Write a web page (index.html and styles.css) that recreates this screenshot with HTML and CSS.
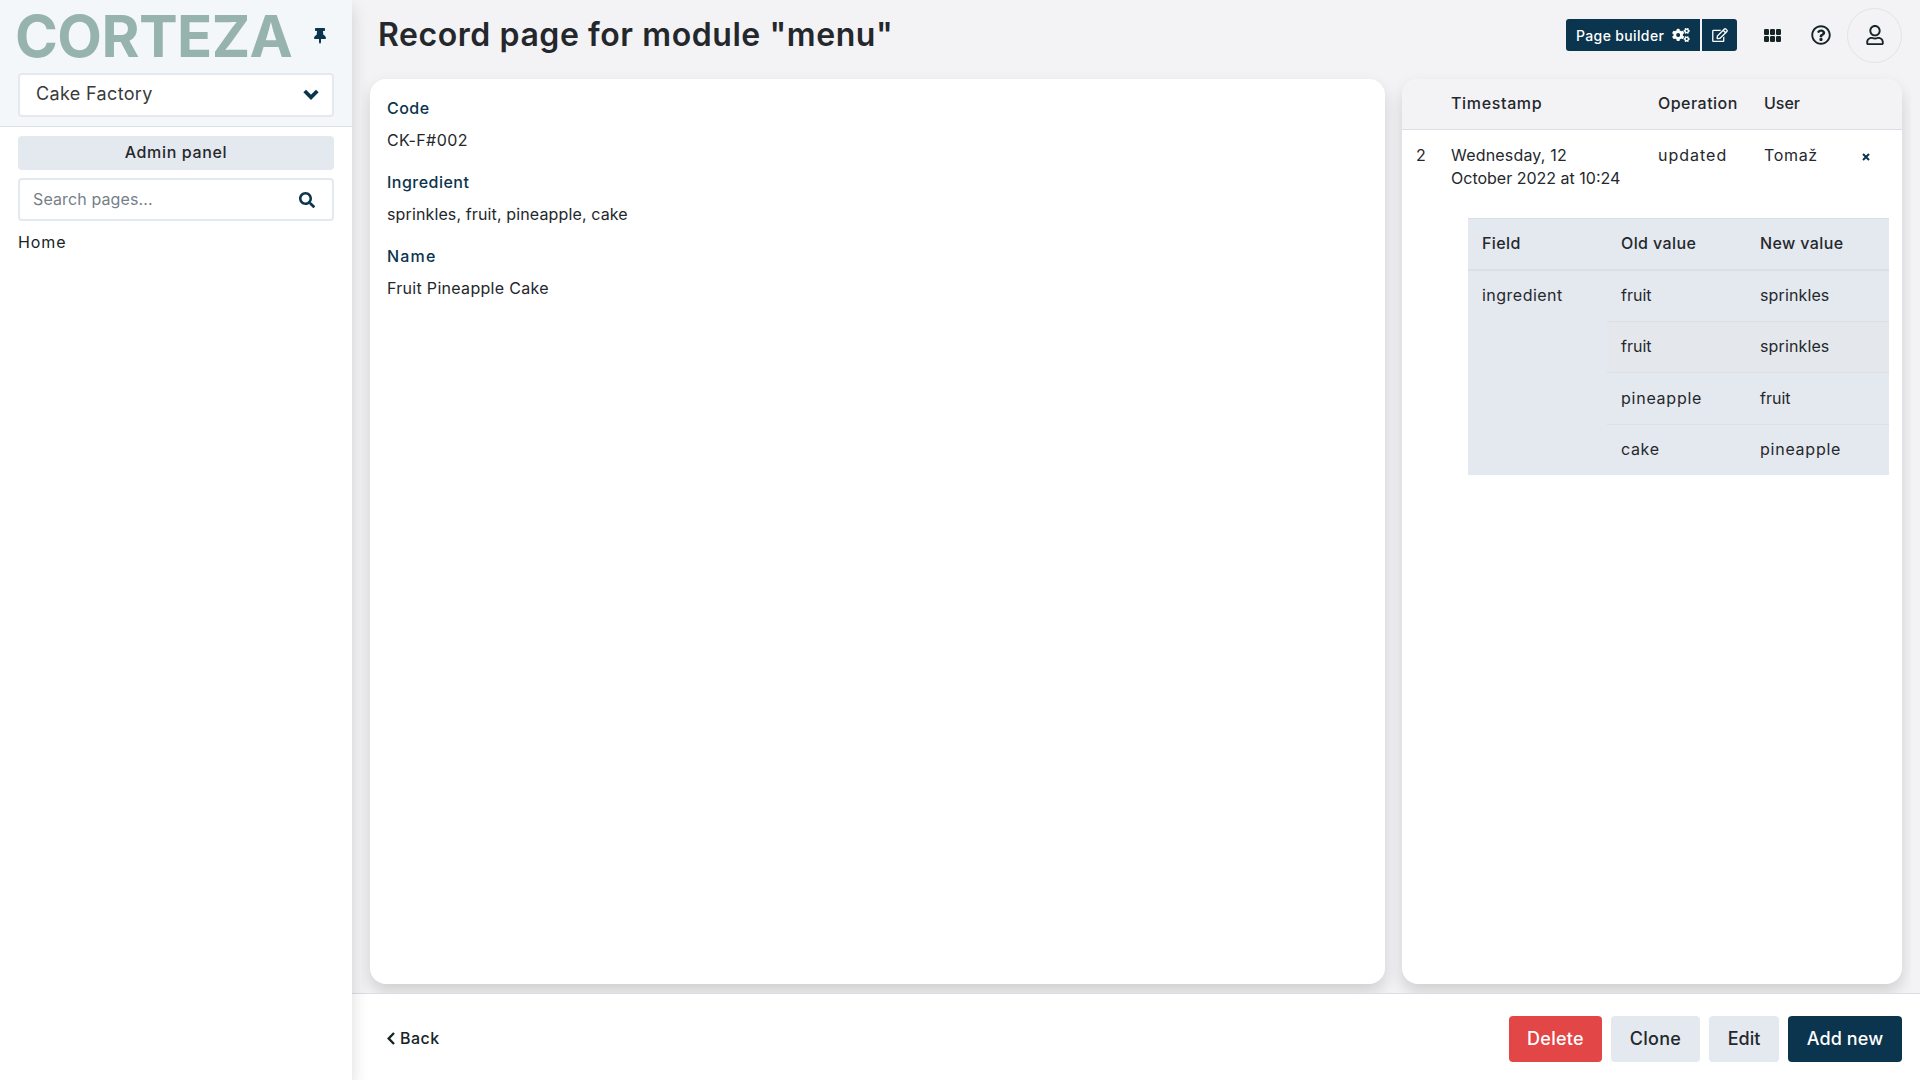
FILE: index.html
```
<!DOCTYPE html>
<html lang="en">
<head>
<meta charset="utf-8">
<title>Record page for module "menu"</title>
<link rel="stylesheet" href="styles.css">
</head>
<body>
<div class="app">
  <aside class="sidebar">
    <div class="sidebar-head">
      <div class="brand">
        <span class="logo">CORTEZA</span>
        <svg class="pin" viewBox="0 0 384 512"><path d="M298 214.300L285.800 96H328c13.300 0 24-10.700 24-24V24c0-13.300-10.700-24-24-24H56C42.700 0 32 10.700 32 24v48c0 13.300 10.700 24 24 24h42.200L86 214.300C37.500 236.800 0 277.300 0 328c0 13.300 10.700 24 24 24h136v104c0 1.200.3 2.500.8 3.600l24 48c2.900 5.900 11.400 5.900 14.300 0l24-48c.6-1.100.9-2.300.9-3.600V352h136c13.300 0 24-10.700 24-24 0-51.200-38-91.400-86-113.700z"/></svg>
      </div>
      <div class="select">
        <span>Cake Factory</span>
        <svg class="caret" viewBox="0 0 16 11"><path d="M1.700 2l6.300 6.300L14.300 2"/></svg>
      </div>
    </div>
    <div class="sidebar-body">
      <button class="admin">Admin panel</button>
      <div class="search">
        <span>Search pages...</span>
        <svg class="search-icon" viewBox="0 0 512 512"><path d="M505 442.700L405.300 343c-4.500-4.500-10.600-7-17-7H372c27.600-35.300 44-79.700 44-128C416 93.100 322.900 0 208 0S0 93.100 0 208s93.100 208 208 208c48.300 0 92.700-16.400 128-44v16.300c0 6.400 2.500 12.500 7 17l99.700 99.700c9.400 9.400 24.600 9.400 33.900 0l28.300-28.300c9.400-9.400 9.400-24.600.1-34zM208 336c-70.700 0-128-57.200-128-128 0-70.700 57.200-128 128-128 70.700 0 128 57.200 128 128 0 70.700-57.200 128-128 128z"/></svg>
      </div>
      <a class="nav-link">Home</a>
    </div>
  </aside>

  <div class="page">
    <header class="topbar">
      <h1>Record page for module "menu"</h1>
      <div class="tools">
        <div class="btn-group">
          <button class="builder"><span>Page builder</span>
            <svg class="cogs" viewBox="0 0 640 512"><path d="M512.100 191l-8.200 14.300c-3 5.300-9.400 7.500-15.100 5.400-11.800-4.400-22.600-10.700-32.100-18.600-4.600-3.800-5.800-10.500-2.800-15.700l8.200-14.300c-6.900-8-12.300-17.300-15.900-27.400h-16.500c-6 0-11.200-4.300-12.200-10.300-2-12-2.100-24.600 0-37.100 1-6 6.200-10.400 12.200-10.400h16.500c3.600-10.100 9-19.400 15.900-27.400l-8.200-14.300c-3-5.200-1.900-11.900 2.800-15.700 9.500-7.900 20.400-14.200 32.100-18.600 5.700-2.100 12.100.1 15.100 5.400l8.200 14.300c10.500-1.900 21.200-1.900 31.700 0L552 6.300c3-5.300 9.400-7.500 15.100-5.400 11.800 4.400 22.600 10.700 32.100 18.600 4.600 3.800 5.800 10.500 2.800 15.700l-8.200 14.300c6.900 8 12.300 17.300 15.900 27.400h16.500c6 0 11.200 4.300 12.200 10.300 2 12 2.100 24.600 0 37.100-1 6-6.200 10.400-12.200 10.400h-16.500c-3.600 10.100-9 19.400-15.900 27.400l8.200 14.300c3 5.200 1.900 11.900-2.800 15.700-9.500 7.900-20.400 14.200-32.100 18.600-5.700 2.100-12.100-.1-15.100-5.400l-8.200-14.300c-10.400 1.900-21.200 1.900-31.700 0zm-10.500-58.800c38.500 29.600 82.400-14.300 52.800-52.800-38.500-29.700-82.400 14.300-52.800 52.800zM386.300 286.100l33.700 16.800c10.100 5.800 14.500 18.100 10.500 29.100-8.900 24.200-26.400 46.400-42.600 65.800-7.400 8.900-20.200 11.100-30.300 5.300l-29.100-16.800c-16 13.700-34.600 24.600-54.900 31.700v33.600c0 11.600-8.300 21.600-19.700 23.600-24.600 4.200-50.400 4.400-75.900 0-11.500-2-20-11.900-20-23.600V418c-20.300-7.200-38.900-18-54.900-31.700L74 403c-10 5.800-22.900 3.600-30.300-5.300-16.200-19.400-33.300-41.600-42.200-65.700-4-10.900.4-23.200 10.500-29.100l33.300-16.800c-3.900-20.900-3.900-42.400 0-63.400L12 205.800c-10.100-5.800-14.600-18.100-10.500-29 8.900-24.200 26-46.400 42.200-65.800 7.400-8.900 20.200-11.100 30.300-5.300l29.100 16.800c16-13.700 34.600-24.600 54.900-31.700V57.100c0-11.500 8.200-21.500 19.600-23.500 24.600-4.200 50.500-4.400 76-.1 11.500 2 20 11.900 20 23.600v33.600c20.300 7.200 38.900 18 54.900 31.700l29.100-16.800c10-5.800 22.900-3.600 30.300 5.300 16.200 19.400 33.200 41.600 42.100 65.800 4 10.900.1 23.200-10 29.100l-33.700 16.800c3.900 21 3.900 42.500 0 63.500zm-117.600 21.100c59.200-77-28.700-164.900-105.700-105.700-59.200 77 28.700 164.900 105.700 105.700zm243.400 182.700l-8.200 14.300c-3 5.300-9.400 7.500-15.100 5.400-11.800-4.400-22.600-10.700-32.100-18.600-4.600-3.800-5.800-10.500-2.800-15.700l8.200-14.300c-6.900-8-12.300-17.300-15.900-27.400h-16.500c-6 0-11.200-4.300-12.200-10.300-2-12-2.100-24.600 0-37.100 1-6 6.200-10.400 12.200-10.400h16.500c3.600-10.100 9-19.400 15.900-27.400l-8.200-14.300c-3-5.200-1.900-11.900 2.800-15.700 9.500-7.900 20.400-14.200 32.100-18.600 5.700-2.100 12.100.1 15.100 5.400l8.200 14.300c10.500-1.900 21.200-1.900 31.700 0l8.200-14.300c3-5.300 9.400-7.500 15.100-5.400 11.800 4.400 22.600 10.700 32.100 18.600 4.600 3.800 5.800 10.500 2.800 15.700l-8.200 14.300c6.900 8 12.300 17.300 15.900 27.400h16.500c6 0 11.200 4.300 12.200 10.300 2 12 2.100 24.600 0 37.100-1 6-6.200 10.400-12.200 10.400h-16.500c-3.600 10.100-9 19.400-15.900 27.400l8.200 14.300c3 5.200 1.900 11.900-2.800 15.700-9.500 7.900-20.400 14.200-32.100 18.600-5.700 2.100-12.100-.1-15.100-5.400l-8.200-14.300c-10.400 1.900-21.200 1.900-31.700 0zM501.600 431c38.500 29.600 82.400-14.300 52.800-52.800-38.500-29.600-82.400 14.300-52.800 52.800z"/></svg>
          </button>
          <button class="edit-page">
            <svg class="pencil" viewBox="0 0 576 512"><path d="M402.300 344.900l32-32c5-5 13.700-1.500 13.700 5.700V464c0 26.500-21.500 48-48 48H48c-26.500 0-48-21.500-48-48V112c0-26.500 21.500-48 48-48h273.500c7.100 0 10.700 8.600 5.700 13.700l-32 32c-1.500 1.500-3.500 2.300-5.700 2.300H48v352h352V350.500c0-2.100.8-4.100 2.300-5.600zm156.600-201.800L296.300 405.700l-90.400 10c-26.200 2.900-48.500-19.200-45.600-45.600l10-90.400L432.900 17.100c22.900-22.900 59.900-22.900 82.700 0l43.200 43.200c22.900 22.900 22.900 60 .1 82.800zM460.100 174L402 115.900 216.200 301.800l-7.300 65.300 65.300-7.300L460.100 174zm64.800-79.700l-43.200-43.200c-4.100-4.100-10.800-4.100-14.800 0L436 82l58.100 58.100 30.900-30.900c4-4.200 4-10.800-.1-14.900z"/></svg>
          </button>
        </div>
        <svg class="apps" viewBox="0 0 17 13"><rect width="5" height="6" rx="1.200"/><rect x="6" width="5" height="6" rx="1.200"/><rect x="12" width="5" height="6" rx="1.200"/><rect y="7" width="5" height="6" rx="1.200"/><rect x="6" y="7" width="5" height="6" rx="1.200"/><rect x="12" y="7" width="5" height="6" rx="1.200"/></svg>
        <svg class="help" viewBox="0 0 512 512"><path d="M256 8C119 8 8 119.100 8 256c0 137 111 248 248 248s248-111 248-248C504 119.100 393 8 256 8zm0 448c-110.500 0-200-89.400-200-200 0-110.500 89.500-200 200-200 110.500 0 200 89.500 200 200 0 110.500-89.400 200-200 200zm107.200-255.200c0 67.100-72.400 68.100-72.400 92.900V300c0 6.600-5.400 12-12 12h-45.600c-6.600 0-12-5.400-12-12v-8.700c0-35.700 27.100-50 47.600-61.500 17.600-9.800 28.300-16.500 28.300-29.600 0-17.200-22-28.700-39.800-28.700-23.200 0-33.900 11-48.900 30-4.100 5.100-11.500 6.100-16.700 2.100l-27.800-21.100c-5.100-3.900-6.300-11.100-2.600-16.400C184.800 131.500 214.900 112 261.800 112c49.100 0 101.400 38.300 101.400 88.800zM298 368c0 23.200-18.800 42-42 42s-42-18.800-42-42 18.800-42 42-42 42 18.800 42 42z"/></svg>
        <div class="avatar">
          <svg class="user" viewBox="0 0 448 512"><path d="M313.600 304c-28.700 0-42.500 16-89.600 16-47.100 0-60.800-16-89.600-16C60.200 304 0 364.200 0 438.400V464c0 26.500 21.500 48 48 48h352c26.500 0 48-21.500 48-48v-25.600c0-74.200-60.200-134.400-134.400-134.400zM400 464H48v-25.600c0-47.600 38.800-86.400 86.400-86.400 14.600 0 38.300 16 89.600 16 51.700 0 74.900-16 89.600-16 47.600 0 86.400 38.800 86.400 86.400V464zM224 288c79.500 0 144-64.500 144-144S303.500 0 224 0 80 64.500 80 144s64.500 144 144 144zm0-240c52.900 0 96 43.100 96 96s-43.100 96-96 96-96-43.100-96-96 43.100-96 96-96z"/></svg>
        </div>
      </div>
    </header>

    <main class="blocks">
      <section class="card record">
        <div class="field"><label class="ls5">Code</label><p class="ls4">CK-F#002</p></div>
        <div class="field"><label class="ls5">Ingredient</label><p class="ls1">sprinkles, fruit, pineapple, cake</p></div>
        <div class="field"><label class="ls12">Name</label><p class="ls3">Fruit Pineapple Cake</p></div>
      </section>

      <section class="card history">
        <table class="log">
          <colgroup><col class="c-num"><col class="c-time"><col class="c-op"><col class="c-user"><col></colgroup>
          <thead><tr><th></th><th class="ls7">Timestamp</th><th class="ls5">Operation</th><th>User</th><th></th></tr></thead>
          <tbody><tr>
            <td>2</td>
            <td><span class="ls2">Wednesday, 12</span><br>October 2022 at 10:24</td>
            <td class="ls10">updated</td>
            <td class="ls7">Tomaž</td>
            <td class="close"><svg viewBox="0 0 8 8"><path d="M1 1l6 6M7 1L1 7"/></svg></td>
          </tr></tbody>
        </table>
        <table class="changes">
          <colgroup><col class="c-field"><col class="c-old"><col></colgroup>
          <thead><tr><th class="ls4">Field</th><th class="ls4">Old value</th><th class="ls4">New value</th></tr></thead>
          <tbody>
            <tr class="first"><td rowspan="4" class="ls5">ingredient</td><td>fruit</td><td class="ls1">sprinkles</td></tr>
            <tr class="alt"><td>fruit</td><td class="ls1">sprinkles</td></tr>
            <tr class="tall"><td class="ls8">pineapple</td><td>fruit</td></tr>
            <tr><td class="ls7">cake</td><td class="ls8">pineapple</td></tr>
          </tbody>
        </table>
      </section>
    </main>

    <footer class="actions">
      <a class="back"><svg viewBox="0 0 8 13"><path d="M7 1L1.700 6.500 7 12"/></svg><span>Back</span></a>
      <div class="buttons">
        <button class="btn delete">Delete</button>
        <button class="btn clone">Clone</button>
        <button class="btn edit">Edit</button>
        <button class="btn add">Add new</button>
      </div>
    </footer>
  </div>
</div>
</body>
</html>
```
FILE: styles.css
```
* { box-sizing: border-box; }
body {
  margin: 0;
  background: #f3f3f5;
  color: #24282c;
  font: 400 16px/23px Inter, "Liberation Sans", sans-serif;
}
button { font: inherit; border: 0; margin: 0; padding: 0; color: inherit; }
svg { display: block; flex: none; fill: currentColor; }

.ls1 { letter-spacing: .13px; }
.ls2 { letter-spacing: .19px; }
.ls3 { letter-spacing: .3px; }
.ls4 { letter-spacing: .4px; }
.ls5 { letter-spacing: .48px; }
.ls7 { letter-spacing: .65px; }
.ls8 { letter-spacing: .75px; }
.ls10 { letter-spacing: 1px; }
.ls12 { letter-spacing: 1.2px; }

.app { display: flex; width: 1920px; height: 1080px; overflow: hidden; }

/* Sidebar */
.sidebar {
  position: relative;
  z-index: 2;
  width: 352px;
  flex: none;
  background: #fff;
  box-shadow: 0 8px 16px rgba(0, 0, 0, .15);
}
.sidebar-head {
  height: 127px;
  padding: 0 18px;
  background: #f3f7fa;
  border-bottom: 1px solid #d9e0e6;
}
.brand { display: flex; align-items: center; justify-content: space-between; height: 73px; padding: 0 8px 1px 0; }
.logo {
  margin-left: -3px;
  color: #97b3ad;
  font-size: 58px;
  font-weight: 650;
  line-height: 70px;
  letter-spacing: -.6px;
}
.pin { width: 12px; height: 16px; color: #0b344e; }
.select {
  display: flex;
  align-items: center;
  justify-content: space-between;
  height: 44px;
  padding: 0 13px 3px 16px;
  background: #fff;
  border: 2px solid #e4e9ef;
  border-radius: 4px;
  color: #3a3a3a;
  font-size: 18px;
  letter-spacing: .35px;
}
.caret { width: 16px; height: 11px; margin-top: 2px; color: #0b344e; }
.caret path, .back path, .close path { fill: none; stroke: currentColor; }
.caret path { stroke-width: 3.8; }
.sidebar-body { padding: 9px 18px; }
.admin {
  display: block;
  width: 100%;
  height: 34px;
  padding-bottom: 1px;
  background: #e4e8ef;
  border-radius: 4px;
  font-weight: 500;
  letter-spacing: .65px;
}
.search {
  display: flex;
  align-items: center;
  justify-content: space-between;
  height: 43px;
  margin-top: 8px;
  padding: 0 17px 0 13px;
  border: 2px solid #e4e9ef;
  border-radius: 4px;
  color: #757f8a;
  letter-spacing: .12px;
}
.search-icon { width: 16px; height: 16px; color: #0b344e; }
.nav-link { display: block; margin-top: 10px; color: #162425; letter-spacing: .9px; }

/* Page */
.page { display: flex; flex: 1; flex-direction: column; min-width: 0; }
.topbar {
  display: flex;
  align-items: center;
  justify-content: space-between;
  height: 70px;
  padding: 0 18px 0 26px;
}
h1 { margin: 0; font-size: 32px; font-weight: 600; line-height: 40px; letter-spacing: .57px; }
.tools { display: flex; align-items: center; color: #162425; }
.btn-group { display: flex; gap: 2px; color: #fff; }
.builder, .edit-page { display: flex; align-items: center; height: 32px; background: #0b344e; }
.builder {
  width: 134px;
  padding-left: 10px;
  gap: 8px;
  border-radius: 3px 0 0 3px;
  font-size: 14px;
  font-weight: 500;
  letter-spacing: .36px;
}
.cogs { width: 18px; height: 14px; }
.edit-page { width: 35px; padding-left: 10px; border-radius: 0 3px 3px 0; }
.pencil { width: 16px; height: 14px; }
.apps { width: 17px; height: 13px; margin-left: 27px; }
.help { width: 20px; height: 20px; margin-left: 30px; }
.avatar {
  display: flex;
  align-items: center;
  justify-content: center;
  width: 55px;
  height: 55px;
  margin-left: 16px;
  border: 1px solid #e1e3e6;
  border-radius: 50%;
}
.user { width: 18px; height: 20px; }

.blocks {
  display: flex;
  flex: 1;
  gap: 17px;
  min-height: 0;
  margin: 0 9px;
  padding: 9px;
  overflow: hidden;
}
.card { background: #fff; border-radius: 16px; box-shadow: 0 8px 16px rgba(0, 0, 0, .15); }
.record { width: 1015px; padding: 17px; }
.field { height: 74px; }
.field label { display: block; height: 32px; line-height: 24px; color: #0b344e; font-weight: 500; }
.field p { margin: 0; line-height: 24px; }

/* Record history */
.history { width: 500px; overflow: visible; }
table { border-collapse: separate; border-spacing: 0; table-layout: fixed; }
th, td { padding: 14px 0 0 14px; text-align: left; vertical-align: top; white-space: nowrap; }
th { padding-top: 13px; font-weight: 500; }
.log { width: 500px; }
.log th { height: 51px; background: #f3f3f5; border-bottom: 1px solid #dcdfe6; }
.log th:first-child { border-top-left-radius: 16px; }
.log th:last-child { border-top-right-radius: 16px; }
.log tbody tr { height: 88px; }
.c-num { width: 35px; }
.c-time { width: 207px; }
.c-op { width: 106px; }
.c-user { width: 99px; }
.close { padding: 23px 0 0 13px; color: #0b344e; }
.close svg { width: 8px; height: 8px; }
.close path { stroke-width: 2; }
.changes { width: 421px; margin-left: 66px; background: #e4e8ef; }
.c-field { width: 139px; }
.c-old { width: 139px; }
.changes th { height: 53px; border-top: 1px solid #dadfe5; border-bottom: 2px solid #dadfe3; }
.changes td { height: 51px; padding-top: 13px; border-top: 1px solid #dcdfe3; }
.changes .first td { height: 50px; border-top: 0; }
.changes .alt td { background: #e4e8ed; }
.changes .tall td { height: 52px; padding-top: 14px; }

/* Footer */
.actions {
  display: flex;
  align-items: center;
  justify-content: space-between;
  height: 87px;
  padding: 3px 18px 0 35px;
  background: #fff;
  border-top: 1px solid #dcdce4;
}
.back { display: flex; align-items: center; gap: 5px; color: #162425; font-weight: 500; letter-spacing: .5px; }
.back svg { width: 8px; height: 13px; }
.back path { stroke-width: 2.4; }
.buttons { display: flex; gap: 9px; }
.btn { height: 46px; border-radius: 4px; background: #e4e8ef; font-size: 18px; font-weight: 500; letter-spacing: .3px; }
.delete { width: 93px; background: #e24646; color: #fff; }
.clone { width: 89px; }
.edit { width: 70px; letter-spacing: 0; }
.add { width: 114px; background: #0b344e; color: #fff; letter-spacing: .12px; }
```
